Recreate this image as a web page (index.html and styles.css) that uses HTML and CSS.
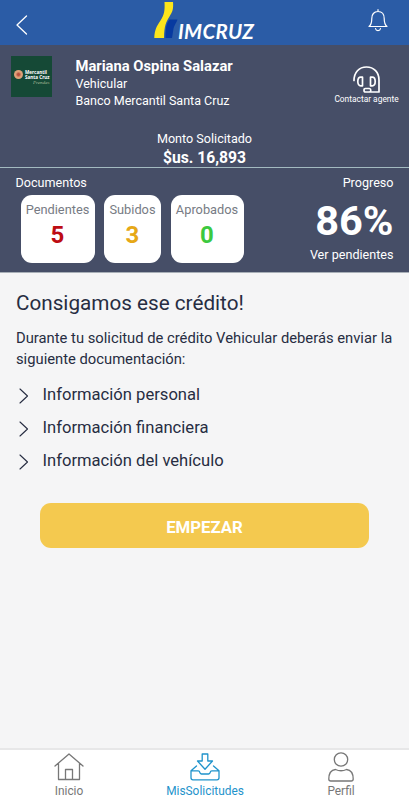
FILE: index.html
```html
<!DOCTYPE html>
<html lang="es">
<head>
<meta charset="utf-8">
<meta name="viewport" content="width=device-width">
<title>Mis Solicitudes</title>
<link rel="stylesheet" href="styles.css">
</head>
<body>
<header class="topbar">
  <svg class="back" viewBox="0 0 12 20"><path d="M10.500 1 1 10 10.500 19"/></svg>
  <div class="brand">
    <svg class="brand-mark" viewBox="0 0 26 38">
      <path class="mark-blue" d="M15.500 17.500H23.500c-1 3.500-3.500 5.500-4.200 10.500L18 36h-6.500c0-8 .3-14 4-18.500z"/>
      <path class="mark-yellow" d="M10.500 0H19c.6 7-.5 10-3.500 14.500-3.500 5.500-5.300 9-5.500 21.500H.3c.2-8 2.500-12 6.200-17.500C10.200 13 11 9 10.500 0z"/>
    </svg>
    <span class="brand-name">IMCRUZ</span>
  </div>
  <svg class="bell" viewBox="0 0 20 23"><path d="M1 17.500c2.800-2 2.800-4.500 2.800-8 0-4.500 2.600-7 6.200-7s6.200 2.500 6.200 7c0 3.500 0 6 2.800 8zM10 .7v1.800M7.500 19.500c.5 2.800 4.500 2.800 5 0"/></svg>
</header>
<section class="applicant">
  <div class="applicant-row">
    <div class="bank">
      <i class="bank-dot"></i>
      <div class="bank-name">Mercantil<br>Santa Cruz<em>Prendas</em></div>
    </div>
    <div class="person">
      <h1>Mariana Ospina Salazar</h1>
      <p class="vehicle">Vehicular</p>
      <p class="bank-title">Banco Mercantil Santa Cruz</p>
    </div>
    <div class="agent">
      <svg viewBox="0 0 27 27"><path d="M1 14.500C1 6.500 6 1 13.500 1S26 6.500 26 14v12h-8.500M9.500 11.200v8.600H7.800c-4 0-4-8.600 0-8.600zM17.500 11.200v8.600h1.700c4 0 4-8.600 0-8.600zM12.500 22.500h3.800q1.500 0 1.500 1.700T16.300 26h-3.800q-1.500 0-1.500-1.800t1.500-1.700z"/></svg>
      <span>Contactar agente</span>
    </div>
  </div>
  <p class="amount-label">Monto Solicitado</p>
  <p class="amount">$us. 16,893</p>
</section>
<section class="stats">
  <div class="docs">
    <p class="docs-title">Documentos</p>
    <div class="cards">
      <div class="card pending"><span>Pendientes</span><b>5</b></div>
      <div class="card uploaded"><span>Subidos</span><b>3</b></div>
      <div class="card approved"><span>Aprobados</span><b>0</b></div>
    </div>
  </div>
  <div class="progress">
    <p class="progress-title">Progreso</p>
    <strong>86%</strong>
    <p class="see">Ver pendientes</p>
  </div>
</section>
<main>
  <h2>Consigamos ese crédito!</h2>
  <p class="intro">Durante tu solicitud de crédito Vehicular deberás enviar la<br>siguiente documentación:</p>
  <ul>
    <li><svg viewBox="0 0 10 16"><path d="m1 1 7.500 7L1 15"/></svg><span>Información personal</span></li>
    <li><svg viewBox="0 0 10 16"><path d="m1 1 7.500 7L1 15"/></svg><span>Información financiera</span></li>
    <li><svg viewBox="0 0 10 16"><path d="m1 1 7.500 7L1 15"/></svg><span>Información del vehículo</span></li>
  </ul>
  <button>EMPEZAR</button>
</main>
<nav>
  <a><svg viewBox="0 0 30 30"><path d="M1 14 15 2l14 12M4.500 11.500v16h21v-16M11.500 27.500v-10h7v10"/></svg><span>Inicio</span></a>
  <a class="active"><svg viewBox="0 0 30 30"><path d="M12.200 2h5.600v7h4.700L15 17.300 7.500 9h4.700zM6.500 14 1 18.800v7q0 2 2 2h24q2 0 2-2v-7L23.500 14M1 18.800h7.200q1.300 0 1.600 1.500t1.700 1.700h7q1.400-.2 1.700-1.700t1.600-1.500H29"/></svg><span>MisSolicitudes</span></a>
  <a><svg viewBox="0 0 30 30"><circle cx="15" cy="7.500" r="6.700"/><path d="M9.500 17.500q5.500 2.500 11 0c4 .5 6.700 4 6.700 9.500q0 2-2 2H4.800q-2 0-2-2c0-5.500 2.700-9 6.700-9.500z"/></svg><span>Perfil</span></a>
</nav>
</body>
</html>
```
FILE: styles.css
```css
* { box-sizing: border-box; margin: 0; padding: 0; }
body {
  width: 409px; height: 800px; overflow: hidden;
  display: flex; flex-direction: column;
  font-family: Roboto, "Liberation Sans", sans-serif;
  background: #f5f5f6; color: #272d42;
}
svg { fill: none; stroke: currentColor; stroke-linecap: round; stroke-linejoin: round; flex: none; display: block; }
p, span, b, strong { white-space: nowrap; }

.topbar { height: 45px; background: #2b5ca6; color: #fff; display: flex; align-items: flex-start; padding: 0 21px 0 16px; }
.back { width: 12px; height: 20px; margin-top: 15px; stroke-width: 1.3; }
.brand { display: flex; margin: 2px 0 0 126px; flex: 1; }
.brand-mark { width: 26px; height: 38px; stroke: none; }
.mark-yellow { fill: #fce51b; }
.mark-blue { fill: #073aa0; }
.brand-name { font: italic bold 20.500px/24px Lato, sans-serif; letter-spacing: .3px; margin: 17px 0 0 -2px; }
.bell { width: 20px; height: 23px; margin-top: 9px; stroke-width: 1.2; }

.applicant { height: 123px; background: #464e67; color: #fff; border-bottom: 1px solid #a3bac0; }
.applicant-row { height: 85px; display: flex; padding: 11px 10px 0 11px; }
.bank { width: 41px; height: 41px; background: #154936; display: flex; align-items: flex-start; padding: 14px 0 0 3px; }
.bank-dot { width: 9px; height: 9px; border-radius: 50%; background: radial-gradient(circle, #b64f3d 15%, #dda078 45%); flex: none; }
.bank-name { font: bold 4.600px/5px "Noto Sans", sans-serif; margin-left: 2px; white-space: nowrap; }
.bank-name em { display: block; font: italic 5px/5px "Liberation Serif", serif; text-align: right; color: #a9bd99; }
.person { margin-left: 23.500px; width: 250px; font-size: 12.500px; }
.person h1 { font-size: 14.750px; line-height: 20px; height: 19px; }
.person p { line-height: 17px; }
.agent { width: 64px; margin: 10px 0 0 9px; display: flex; flex-direction: column; align-items: center; font-size: 8.400px; line-height: 12px; }
.agent svg { width: 27px; height: 27px; stroke-width: 1.7; }
.amount-label { text-align: center; font-size: 12.600px; line-height: 18px; }
.amount { text-align: center; font-size: 15.700px; line-height: 20px; font-weight: 700; }

.stats { height: 105px; background: #464e67; color: #fff; display: flex; justify-content: space-between; padding: 5px 15.500px 0; border-bottom: 1px solid #a8afb7; font-size: 12.600px; }
.docs-title, .progress-title { line-height: 19px; }
.cards { display: flex; margin: 3px 0 0 5px; }
.card { height: 68px; background: #fff; border-radius: 11px; display: flex; flex-direction: column; align-items: center; padding-top: 6px; }
.card span { color: #777b84; line-height: 18px; font-size: 12.800px; }
.card b { font-size: 24px; line-height: 33px; }
.pending { width: 74px; }
.uploaded { width: 57px; margin: 0 9.500px; }
.approved { width: 73px; }
.pending b { color: #bd0c13; }
.uploaded b { color: #e6a817; }
.approved b { color: #3cc93f; }
.progress { display: flex; flex-direction: column; align-items: flex-end; }
.progress strong { font-size: 41.500px; line-height: 50px; margin-top: 4px; }
.see { line-height: 18px; }

main { flex: 1; padding: 16px 16px 0; }
h2 { font-size: 20.700px; line-height: 28px; font-weight: 400; white-space: nowrap; }
.intro { font-size: 14.770px; line-height: 21px; margin-top: 11px; }
ul { list-style: none; margin-top: 8px; }
li { display: flex; align-items: center; height: 33px; font-size: 16.600px; }
li svg { width: 10px; height: 16px; margin: 2px 13.500px 0 3px; stroke-width: 1.1; }
button { display: block; width: 329px; height: 45px; margin: 26px 0 0 24px; border: 0; border-radius: 11px; background: #f4c94f; color: #fff; font: bold 16.800px/48px Roboto, sans-serif; }

nav { height: 52px; background: #fff; border-top: 2px solid #e7e7e8; display: flex; padding-left: 1px; }
nav a { width: 137px; display: flex; flex-direction: column; align-items: center; color: #777; font-size: 11.900px; line-height: 16px; padding-top: 2px; }
nav svg { width: 30px; height: 30px; stroke-width: 1.3; margin-bottom: 1px; }
nav .active { color: #1f93cb; }
```
